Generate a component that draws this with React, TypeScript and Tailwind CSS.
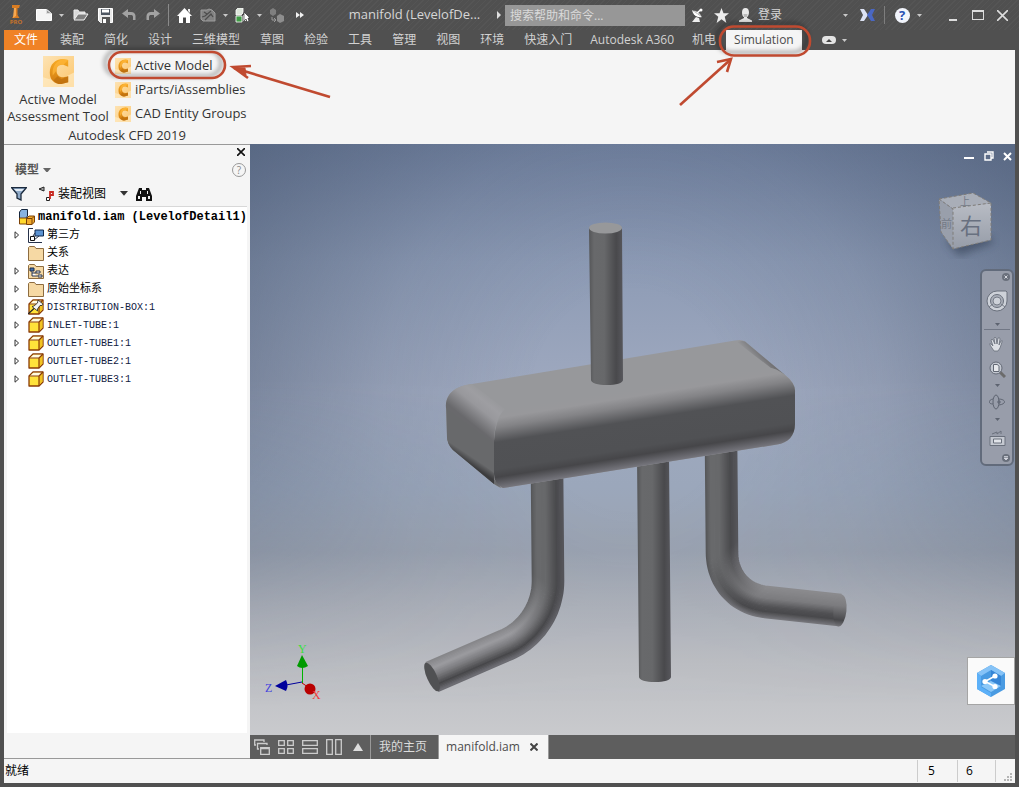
import React, { useState } from 'react';

type Point = [number, number];
type Stop = [number, number[]];

const ribbonTabs = [
  '装配', '简化', '设计', '三维模型', '草图', '检验', '工具', '管理',
  '视图', '环境', '快速入门', 'Autodesk A360', '机电', 'Simulation',
];

const cfdTools = ['Active Model', 'iParts/iAssemblies', 'CAD Entity Groups'];

const treeNodes = [
  { label: '第三方', icon: 'third', expandable: true },
  { label: '关系', icon: 'folder', expandable: false },
  { label: '表达', icon: 'views', expandable: true },
  { label: '原始坐标系', icon: 'folder', expandable: true },
  { label: 'DISTRIBUTION-BOX:1', icon: 'pinned', expandable: true },
  { label: 'INLET-TUBE:1', icon: 'part', expandable: true },
  { label: 'OUTLET-TUBE1:1', icon: 'part', expandable: true },
  { label: 'OUTLET-TUBE2:1', icon: 'part', expandable: true },
  { label: 'OUTLET-TUBE3:1', icon: 'part', expandable: true },
];

const isLatin = (text: string) => /^[A-Z]/.test(text);

const IconButton = ({ label, className = 'w-6', children }: { label: string; className?: string; children: React.ReactNode }) => (
  <button aria-label={label} className={`flex shrink-0 items-center justify-center ${className}`}>
    {children}
  </button>
);

const Caret = ({ color = '#c9c9c9', size = 5 }: { color?: string; size?: number }) => (
  <svg width={size} height={size * 0.6} viewBox="0 0 10 6"><path d="M0 0h10L5 6z" fill={color} /></svg>
);

const CfdIcon = ({ size }: { size: number }) => (
  <svg width={size} height={size} viewBox="0 0 32 32" className="shrink-0">
    <defs>
      <linearGradient id="cfdBg" x1="0" y1="0" x2="1" y2="1">
        <stop offset="0" stopColor="#fde3b4" />
        <stop offset="1" stopColor="#fcc66c" />
      </linearGradient>
      <linearGradient id="cfdRing" x1="0" y1="0" x2="0" y2="1">
        <stop offset="0" stopColor="#f9ac25" />
        <stop offset="1" stopColor="#d07b10" />
      </linearGradient>
    </defs>
    <path d="M0 0h32v32H0z" fill="url(#cfdBg)" />
    <path d="M0 22l14 4 18-9v15H0z" fill="#fff0d0" opacity=".6" />
    <path d="M26 11V4l-5-1C12 3 7 9 7 17c0 7 4 12 12 12l7-2v-6l-5 1c-5 0-7-3-7-7 0-5 3-6 7-6z" fill="url(#cfdRing)" />
    <path d="M26 4l-5 5c-5 0-7 2-7 6l-4 5c-1-10 4-15 11-17z" fill="#ffb73b" opacity=".7" />
    <path d="M11 25l4-4 4 3 7-3v6l-7 2c-4 0-6-1-8-4z" fill="#b86a0c" opacity=".6" />
  </svg>
);

const CubeIcon = () => (
  <>
    <path d="M1 5l4-4h10v10l-4 4H1z" fill="#ffe23a" stroke="#8a3b06" strokeWidth="1.3" strokeLinejoin="round" />
    <path d="M1.7 5.2L5.3 1.7h8.5l-3.3 3.5z" fill="#fffbe0" />
    <path d="M11 14V5l3.5-3v8.5z" fill="#f2c322" />
    <path d="M1 5h10v10M11 5l4-4" fill="none" stroke="#8a3b06" strokeWidth="1.2" />
  </>
);

const FolderIcon = () => (
  <path d="M.5 15.5v-13l1-1h5l1.500 2h7.500v12z" fill="#f6d9a4" stroke="#8d6c40" />
);

const NodeIcon = ({ kind }: { kind: string }) => (
  <svg width="16" height="16" viewBox="0 0 16 16" className="shrink-0">
    {kind === 'folder' && <FolderIcon />}
    {kind === 'views' && (
      <>
        <FolderIcon />
        <path d="M2 5h4v3H2z" fill="#3f6fae" stroke="#1c2c4a" />
        <path d="M4 8v5h5M4 10h4M8 8h4v2H8zM10 12h4v2h-4z" fill="#fff" stroke="#26324a" />
      </>
    )}
    {kind === 'third' && (
      <>
        <path d="M5 1.500H.5v14H14" fill="none" stroke="#26324a" />
        <path d="M7 3h8.500v6H7z" fill="#5c93d2" stroke="#10294c" />
        <path d="M3 12l4-6M6 13l5-4" fill="none" stroke="#26324a" />
        <path d="M2.500 9.500h4v4h-4z" fill="#fff" stroke="#111" />
      </>
    )}
    {kind === 'part' && <CubeIcon />}
    {kind === 'pinned' && (
      <>
        <CubeIcon />
        <path d="M10 1l5 4-1 1.500h-2L9.500 10v2L4 7.500l2-.5 3.500-3z" fill="#f4f4f4" stroke="#222" strokeWidth=".8" />
        <path d="M6 9.500L0 15" stroke="#222" strokeWidth="1.2" />
      </>
    )}
  </svg>
);

const TitleBar = () => (
  <header className="flex h-[30px] items-center bg-[repeating-linear-gradient(135deg,#505050_0px,#505050_3px,#555555_3px,#555555_4px)] text-[12px] text-[#d6d6d6]">
    <button aria-label="Inventor Pro" className="flex w-8 shrink-0 flex-col items-center text-[6px] leading-[6px] font-bold text-[#c87328]">
      <svg width="10" height="14" viewBox="0 0 10 14">
        <path d="M1 0h8l-1 3H6.500v7l2 3H1l2-3V3H1z" fill="#d87c22" />
        <path d="M3 3h2v8l-3 2z" fill="#f6a850" />
      </svg>
      PRO
    </button>
    <IconButton label="新建">
      <svg width="16" height="14" viewBox="0 0 16 14"><path d="M.5 1.500h10l5 4v7H.5z" fill="#f4f4f4" stroke="#fff" /><path d="M10.500 1.500v4h5z" fill="#9b9b9b" stroke="#ddd" /></svg>
    </IconButton>
    <IconButton label="新建选项" className="mr-[3px] w-2.5"><Caret /></IconButton>
    <IconButton label="打开">
      <svg width="16" height="12" viewBox="0 0 16 12"><path d="M1 10V1h4l1 2h6v2" fill="#d9d9d9" stroke="#eee" /><path d="M1 11l4-6h10l-4 6z" fill="#7f7f7f" stroke="#f2f2f2" /></svg>
    </IconButton>
    <IconButton label="保存">
      <svg width="15" height="15" viewBox="0 0 15 15"><path d="M.5.5h14v14h-12l-2-2z" fill="#e9e9e9" stroke="#fff" /><path d="M3 1h9v6H3z" fill="#4d5560" /><path d="M4 1.500h7v3H4z" fill="#fff" /><path d="M4 9h8v6H4z" fill="#555" /><path d="M5 11h3v4H5z" fill="#fff" /></svg>
    </IconButton>
    <IconButton label="撤消">
      <svg width="14" height="12" viewBox="0 0 14 12"><path d="M6 0v3h3c3 0 4.500 2 4.500 4v4H11V8c0-1.500-1-2-2-2H6v3L0 4.500z" fill="#a2a2a2" /></svg>
    </IconButton>
    <IconButton label="重做">
      <svg width="14" height="12" viewBox="0 0 14 12"><path d="M8 0v3H5C2 3 .5 5 .5 7v4H3V8c0-1.500 1-2 2-2h3v3l6-4.500z" fill="#a2a2a2" /></svg>
    </IconButton>
    <span className="mx-[3px] h-[22px] w-px shrink-0 bg-[#8a8a8a]" />
    <IconButton label="主页">
      <svg width="15" height="15" viewBox="0 0 15 15"><path d="M7.500 0L15 8h-2v7H9V9.500H6V15H2V8H0z" fill="#fff" /><path d="M11 1h2v4l-2-2z" fill="#eee" /><path d="M6.500 10h2v5h-2z" fill="#444" /></svg>
    </IconButton>
    <IconButton label="更新">
      <svg width="16" height="14" viewBox="0 0 16 14"><path d="M1 2h6l2-1 3 1 3 3v8H3l-2-2z" fill="#828282" stroke="#9c9c9c" /><path d="M2 9l3-1 6-5M5 12l6-6 2 3M4 4l3 2" fill="none" stroke="#4d4d4d" strokeWidth="1.300" /></svg>
    </IconButton>
    <IconButton label="更新选项" className="w-2.5"><Caret /></IconButton>
    <IconButton label="选择">
      <svg width="15" height="15" viewBox="0 0 15 15"><path d="M1 2l2-2h5v5L6 7H1z" fill="#dce5da" stroke="#fff" strokeWidth=".8" /><path d="M1 8h6v6H1z" fill="#3f9b45" stroke="#fff" strokeWidth=".8" /><path d="M8 7h3v6H8z" fill="#e8e8e8" /><path d="M9 4v9l2-2 1 3 2-1-1-3h2z" fill="#fff" stroke="#333" strokeWidth=".7" /></svg>
    </IconButton>
    <IconButton label="选择选项" className="w-2.5"><Caret /></IconButton>
    <IconButton label="替换">
      <svg width="15" height="15" viewBox="0 0 15 15"><path d="M1 2l3-2 3 2v4L4 8 1 6z" fill="#7f7f7f" /><path d="M8 8l3-2 4 2v5l-4 2-3-2z" fill="#8e8e8e" /><path d="M3 9v3h3M5 10l2 2-2 2" fill="none" stroke="#999" /></svg>
    </IconButton>
    <IconButton label="更多">
      <svg width="8" height="6" viewBox="0 0 8 6"><path d="M0 0l4 3-4 3zM4 0l4 3-4 3z" fill="#f2f2f2" /></svg>
    </IconButton>
    <h1 className="min-w-0 flex-1 truncate pl-6 text-center text-[13px]">manifold (LevelofDe...</h1>
    <IconButton label="展开搜索" className="w-3">
      <svg width="4" height="8" viewBox="0 0 4 8"><path d="M0 0l4 4-4 4z" fill="#dedede" /></svg>
    </IconButton>
    <input
      aria-label="搜索帮助和命令"
      placeholder="搜索帮助和命令..."
      className="h-[21px] w-[180px] shrink-0 bg-[#979797] px-[5px] text-[12px] placeholder:text-[#dadada]"
    />
    <IconButton label="通信中心">
      <svg width="13" height="15" viewBox="0 0 13 15"><path d="M1 2c1 5 5 8 10 7z" fill="#fff" /><path d="M1.500 3C5 2 9 5 10.500 8.500" fill="#ccc" /><path d="M6 5l4-3.500" stroke="#fff" strokeWidth="1.500" /><path d="M1 14l4-5 3 1 1 4z" fill="#eee" /><circle cx="10" cy="2" r="1.500" fill="#fff" /></svg>
    </IconButton>
    <IconButton label="收藏夹">
      <svg width="15" height="15" viewBox="0 0 15 15"><path d="M7.500 0l2 5.200H15l-4.300 3.500L12.400 15l-4.900-3.700L2.600 15l1.700-6.300L0 5.200h5.500z" fill="#eee" /></svg>
    </IconButton>
    <IconButton label="用户">
      <svg width="15" height="15" viewBox="0 0 15 15"><path d="M7.500 0C10 0 11 2 11 4.500S9.500 9 9 9v1l5 2.500V14H1v-1.500L6 10V9C5 9 4 7 4 4.500S5 0 7.500 0z" fill="#eaeaea" /><path d="M5.500 6h4L9 9H6z" fill="#bbb" /></svg>
    </IconButton>
    <button className="mr-1 flex h-full w-[94px] shrink-0 items-center justify-between pr-[3px] pl-px">登录<Caret /></button>
    <IconButton label="Exchange">
      <svg width="15" height="12" viewBox="0 0 15 12"><path d="M0 0h4l4 6-4 6H0l3-6z" fill="#dce2f3" /><path d="M15 0h-4L7 6l4 6h4l-3-6z" fill="#4a67c2" /></svg>
    </IconButton>
    <span className="mx-[5px] h-[18px] w-px shrink-0 bg-[#7e7e7e]" />
    <IconButton label="帮助">
      <span className="flex size-[15px] items-center justify-center rounded-full bg-[#f2f5fc] text-[13px] leading-none font-bold text-[#2951b4]">?</span>
    </IconButton>
    <IconButton label="帮助选项" className="mr-4 w-2.5"><Caret /></IconButton>
    <IconButton label="最小化" className="w-[25px]"><span className="mt-2.5 h-0.5 w-2 bg-[#ddd]" /></IconButton>
    <IconButton label="最大化" className="w-[25px]"><span className="h-2.5 w-3 border border-t-2 border-[#ddd]" /></IconButton>
    <IconButton label="关闭" className="mr-1 w-[25px]">
      <svg width="11" height="11" viewBox="0 0 11 11"><path d="M0 0l11 11M11 0L0 11" stroke="#ddd" strokeWidth="1.600" /></svg>
    </IconButton>
  </header>
);

const RibbonTabs = ({ active, onSelect }: { active: string; onSelect: (tab: string) => void }) => (
  <nav className="flex h-5 shrink-0 px-1 text-[12px] leading-5 text-[#d2d2d2]">
    <button className="mr-0.5 shrink-0 bg-[#f08226] px-2.5 text-white">文件</button>
    {ribbonTabs.map((tab) => (
      <button
        key={tab}
        onClick={() => onSelect(tab)}
        className={`shrink-0 whitespace-nowrap ${isLatin(tab) ? 'px-2' : 'px-2.5'} ${tab === active ? 'bg-[#f5f5f5] text-[#4c4c4c]' : ''}`}
      >
        {tab}
      </button>
    ))}
    <button aria-label="功能区显示" className="ml-5 flex items-center gap-1.5">
      <span className="flex h-2 w-3.5 items-center justify-center rounded-sm bg-[#e4e4e4]">
        <svg width="6" height="3" viewBox="0 0 6 3"><path d="M0 3l3-3 3 3z" fill="#444" /></svg>
      </span>
      <Caret />
    </button>
  </nav>
);

const RibbonPanel = () => (
  <section className="mx-1 h-[94px] shrink-0 bg-[#f5f5f5] text-[13px] text-[#333]">
    <div className="w-[246px]">
      <div className="flex h-[76px] pt-1">
        <button className="flex w-[108px] shrink-0 flex-col items-center pt-0.5 leading-[17px]">
          <CfdIcon size={31} />
          <span className="mt-1">Active Model<br />Assessment Tool</span>
        </button>
        <div className="ml-[3px] flex flex-col">
          {cfdTools.map((tool) => (
            <button key={tool} className="flex h-6 items-center gap-1 whitespace-nowrap">
              <CfdIcon size={16} />
              {tool}
            </button>
          ))}
        </div>
      </div>
      <div className="text-center leading-[18px]">Autodesk CFD 2019</div>
    </div>
  </section>
);

const ModelBrowser = () => (
  <aside className="flex w-[246px] shrink-0 flex-col border-t border-b border-[#999] bg-[#f5f5f5] px-[3px] text-[12px] text-black">
    <div className="flex h-3.5 justify-end">
      <IconButton label="关闭浏览器" className="w-3">
        <svg width="8" height="8" viewBox="0 0 8 8"><path d="M0 0l8 8M8 0L0 8" stroke="#111" strokeWidth="1.600" /></svg>
      </IconButton>
    </div>
    <div className="flex h-[22px] items-center justify-between pl-2">
      <button className="flex items-center gap-1 font-bold text-[#555]">模型<Caret color="#666" size={8} /></button>
      <button aria-label="帮助" className="mr-px flex size-3.5 items-center justify-center rounded-full border border-[#999] text-[10px] text-[#888]">?</button>
    </div>
    <div className="flex h-[26px] items-center border-b border-[#d8d8d8] pl-1">
      <button aria-label="过滤器">
        <svg width="16" height="14" viewBox="0 0 16 14"><path d="M.7.7h14.600L10 7v6l-4-2V7z" fill="#8ea9c7" stroke="#1b2a3d" strokeWidth="1.300" /><path d="M3 2h10l-2 2H5z" fill="#e2ecf6" /></svg>
      </button>
      <button className="ml-3 flex items-center gap-1 whitespace-nowrap">
        <svg width="15" height="15" viewBox="0 0 15 15"><path d="M0 3l5-2v4z" fill="#aaa" stroke="#222" /><path d="M7.500 11.500h3v3h-3z" fill="#fff" stroke="#222" /><path d="M11 13V6h3v3h-3" fill="none" stroke="#c82a22" strokeWidth="1.800" /></svg>
        装配视图
        <span className="ml-2.5"><Caret color="#333" size={8} /></span>
      </button>
      <button aria-label="查找" className="ml-2">
        <svg width="16" height="14" viewBox="0 0 16 14"><path d="M3 1h3v2h4V1h3l3 8v5h-6v-4H6v4H0V9z" fill="#111" /><path d="M2 9h2v3H2zM12 9h2v3h-2zM4 4h1v3H4zM11 4h1v3h-1z" fill="#eee" /></svg>
      </button>
    </div>
    <ul className="flex-1 bg-white pt-px font-['Liberation_Mono','Noto_Sans_CJK_SC',monospace]">
      <li>
        <button className="flex h-[18px] items-center gap-[3px] pl-3 text-[12px] font-bold whitespace-nowrap">
          <svg width="16" height="16" viewBox="0 0 16 16" className="shrink-0">
            <path d="M.5 3l2-2.500h6V7l-2 2.500h-6z" fill="#86b2e0" stroke="#15263d" />
            <path d="M.5 9h7v6h-7z" fill="#ffd92e" stroke="#7c4206" />
            <path d="M7.500 9.500L10 7h5.500v6L13 15.500H7.500z" fill="#f2ac2c" stroke="#7c4206" />
            <path d="M7.500 9.500H13v6M13 9.500L15.500 7" fill="none" stroke="#7c4206" />
          </svg>
          manifold.iam (LevelofDetail1)
        </button>
      </li>
      {treeNodes.map((node) => (
        <li key={node.label} className="flex h-[18px] items-center pl-[7px]">
          <button aria-label="展开" className="w-3.5 shrink-0">
            {node.expandable && (
              <svg width="6" height="8" viewBox="0 0 6 8"><path d="M1 .8L4.600 4 1 7.200z" fill="#fff" stroke="#333" /></svg>
            )}
          </button>
          <button className={`flex items-center gap-[3px] whitespace-nowrap ${isLatin(node.label) ? 'text-[10px] text-[#10203f]' : 'text-[11px]'}`}>
            <NodeIcon kind={node.icon} />
            {node.label}
          </button>
        </li>
      ))}
    </ul>
    <div className="h-[25px]" />
  </aside>
);

// Shading across a tube, from its left side (0) to its right side (1)
const uprightShade: Stop[] = [
  [0, [86, 87, 89]], [0.15, [104, 105, 107]], [0.45, [103, 104, 106]], [0.8, [73, 73, 76]], [1, [84, 84, 89]],
];
const leftArmShade: Stop[] = [
  [0, [134, 134, 137]], [0.25, [155, 155, 159]], [0.5, [122, 122, 126]], [0.8, [70, 70, 73]], [1, [108, 108, 114]],
];
const rightArmShade: Stop[] = [
  [0, [116, 116, 121]], [0.2, [72, 72, 75]], [0.35, [80, 80, 83]], [0.65, [124, 124, 127]], [1, [138, 138, 141]],
];

const shadeAt = (stops: Stop[], t: number) => {
  const i = Math.max(1, stops.findIndex(([at]) => at >= t));
  const [a, from] = stops[i - 1];
  const [b, to] = stops[i];
  const k = (t - a) / (b - a);
  return `rgb(${from.map((v, n) => Math.round(v + (to[n] - v) * k)).join(',')})`;
};

const BentTube = ({ id, start, bendStart, corner, bendEnd, end, arm, radius = 16 }: {
  id: string; start: Point; bendStart: Point; corner: Point; bendEnd: Point; end: Point; arm: Stop[]; radius?: number;
}) => {
  const mix = (a: Point, b: Point, k: number): Point => [a[0] + (b[0] - a[0]) * k, a[1] + (b[1] - a[1]) * k];
  const c1 = mix(bendStart, corner, 0.6);
  const c2 = mix(bendEnd, corner, 0.6);
  const center: Point[] = [start];
  for (let i = 0; i <= 24; i++) {
    const t = i / 24;
    const u = 1 - t;
    center.push([0, 1].map((n) =>
      u * u * u * bendStart[n] + 3 * u * u * t * c1[n] + 3 * u * t * t * c2[n] + t * t * t * bendEnd[n]) as Point);
  }
  center.push(end);
  const lines = 26;
  return (
    <g fill="none" strokeWidth="2">
      {Array.from({ length: lines }, (_, n) => {
        const t = n / (lines - 1);
        const offset = (t - 0.5) * 2 * (radius - 0.7);
        const points = center.map((p, i) => {
          const a = center[Math.max(0, i - 1)];
          const b = center[Math.min(center.length - 1, i + 1)];
          const len = Math.hypot(b[0] - a[0], b[1] - a[1]);
          return `${(p[0] + ((b[1] - a[1]) / len) * offset).toFixed(1)},${(p[1] - ((b[0] - a[0]) / len) * offset).toFixed(1)}`;
        });
        return (
          <g key={n}>
            <linearGradient id={`${id}${n}`} gradientUnits="userSpaceOnUse" x1={bendStart[0]} y1={bendStart[1] - 8} x2={bendEnd[0]} y2={bendEnd[1]}>
              <stop offset="0.1" stopColor={shadeAt(uprightShade, t)} />
              <stop offset="0.85" stopColor={shadeAt(arm, t)} />
            </linearGradient>
            <polyline points={points.join(' ')} stroke={`url(#${id}${n})`} />
          </g>
        );
      })}
    </g>
  );
};

const Scene = () => (
  <svg className="absolute inset-0 size-full" viewBox="250 144 765 591" preserveAspectRatio="xMidYMid slice">
    <defs>
      <linearGradient id="sky" x1="0" y1="0" x2="0" y2="1">
        <stop offset="0" stopColor="#7282a0" />
        <stop offset=".2" stopColor="#8d9bb5" />
        <stop offset=".42" stopColor="#9fa9bf" />
        <stop offset=".58" stopColor="#9ba7bb" />
        <stop offset=".69" stopColor="#9ba3b1" />
        <stop offset=".78" stopColor="#adb1ba" />
        <stop offset=".88" stopColor="#bdbfc4" />
        <stop offset="1" stopColor="#c9cacd" />
      </linearGradient>
      <radialGradient id="vignette" gradientUnits="userSpaceOnUse" cx="632" cy="400" r="500" gradientTransform="translate(0 -40) scale(1 1.1)">
        <stop offset=".2" stopColor="#404f68" stopOpacity="0" />
        <stop offset=".5" stopColor="#404f68" stopOpacity=".14" />
        <stop offset="1" stopColor="#404f68" stopOpacity=".6" />
      </radialGradient>
      <linearGradient id="fade" x1="0" y1="0" x2="0" y2="1">
        <stop offset=".4" stopColor="#fff" />
        <stop offset=".8" stopColor="#333" />
        <stop offset=".95" stopColor="#000" />
      </linearGradient>
      <mask id="fadeMask"><path d="M250 144h765v591H250z" fill="url(#fade)" /></mask>
      <linearGradient id="upright" x1="0" y1="0" x2="1" y2="0">
        <stop offset="0" stopColor="#555658" />
        <stop offset=".15" stopColor="#68696b" />
        <stop offset=".45" stopColor="#67686a" />
        <stop offset=".8" stopColor="#49494c" />
        <stop offset="1" stopColor="#57575c" />
      </linearGradient>
      <linearGradient id="front" gradientUnits="userSpaceOnUse" x1="505" y1="409" x2="517" y2="485">
        <stop offset="0" stopColor="#97989b" />
        <stop offset=".1" stopColor="#98989b" />
        <stop offset=".22" stopColor="#838386" />
        <stop offset=".41" stopColor="#515255" />
        <stop offset=".76" stopColor="#505154" />
        <stop offset=".86" stopColor="#464649" />
        <stop offset="1" stopColor="#74747b" />
      </linearGradient>
      <linearGradient id="endFillet" gradientUnits="userSpaceOnUse" x1="470" y1="422" x2="491" y2="396">
        <stop offset="0" stopColor="#69696c" />
        <stop offset=".5" stopColor="#98989c" />
        <stop offset=".75" stopColor="#9e9ea2" />
        <stop offset="1" stopColor="#97989b" />
      </linearGradient>
      <linearGradient id="backFillet" gradientUnits="userSpaceOnUse" x1="758" y1="366" x2="767" y2="358">
        <stop offset="0" stopColor="#97989b" />
        <stop offset="1" stopColor="#6f6f72" />
      </linearGradient>
      <linearGradient id="underside" gradientUnits="userSpaceOnUse" x1="472" y1="457" x2="468" y2="463">
        <stop offset="0" stopColor="#68696b" />
        <stop offset="1" stopColor="#3c3c3e" />
      </linearGradient>
      <linearGradient id="tip" x1="0" y1="0" x2="0" y2="1">
        <stop offset="0" stopColor="#8a8a8d" />
        <stop offset=".35" stopColor="#7c7c7f" />
        <stop offset=".8" stopColor="#48484b" />
        <stop offset="1" stopColor="#747479" />
      </linearGradient>
      <linearGradient id="cubeFace" x1="0" y1="0" x2="0" y2="1">
        <stop offset="0" stopColor="#b8bcc4" />
        <stop offset="1" stopColor="#969ca8" />
      </linearGradient>
      <filter id="soft"><feGaussianBlur stdDeviation="4" /></filter>
    </defs>
    <path d="M250 144h765v591H250z" fill="url(#sky)" />
    <path d="M250 144h765v591H250z" fill="url(#vignette)" mask="url(#fadeMask)" />

    {/* outlet tubes */}
    <BentTube id="outA" start={[547, 470]} bendStart={[548, 581]} corner={[548, 627]} bendEnd={[506, 645]} end={[432, 677]} arm={leftArmShade} />
    <ellipse cx="432" cy="677" rx="5" ry="15.500" transform="rotate(-24 432 677)" fill="#505153" />
    <path d="M637 455h32l2 222c0 3-7 5-16 5s-16-2-16-5z" fill="url(#upright)" />
    <BentTube id="outB" start={[721, 440]} bendStart={[722, 552]} corner={[722, 597]} bendEnd={[766, 602]} end={[840, 610]} arm={rightArmShade} />
    <ellipse cx="840" cy="610.500" rx="6.500" ry="16" transform="rotate(6 840 610)" fill="url(#tip)" />

    {/* distribution box */}
    <path d="M446 405C446 394 455 386 472 384L735 340.500q7-1.500 10 1L785 375Q795 382 795 392V424C795 436 788 443 777 444.500L503 488Q499 488 494 484L453 450Q447 444 447 437z" fill="#97989b" />
    <path d="M742 341l3 .5L785 375l-14-7-34-26z" fill="url(#backFillet)" />
    <path d="M446 404l48 36v39l7 9-7-4-41-34Q447 444 447 437z" fill="#68696b" />
    <path d="M446 408C445 394 455 386 472 384l33 25Q494 419 494 443z" fill="url(#endFillet)" />
    <path d="M447 435l47 38v11L453 450Q447 444 447 435z" fill="url(#underside)" />
    <path d="M505 409L765 368Q774 366 785 375T795 392V424C795 436 788 443 777 444.500L503 488Q494 484 494 474V441Q495 420 505 409z" fill="url(#front)" />

    {/* inlet tube */}
    <path d="M589 228h33l1 152c0 3-7 5-16 5s-16-2-16-5z" fill="url(#upright)" />
    <ellipse cx="605.500" cy="228" rx="16.500" ry="5.500" fill="#97989a" />

    {/* view cube */}
    <path d="M945 240l40-6 10 8-36 14z" fill="#2f3b50" opacity=".55" filter="url(#soft)" />
    <path d="M939 199l34-6 18 10-38 6z" fill="#a9aeb8" />
    <path d="M939 199l14 10v40l-12-17z" fill="#999fab" />
    <path d="M953 208l38-5v37l-38 9z" fill="url(#cubeFace)" />
    <path d="M939 199l34-6 18 10v37l-38 9-12-17zM939 199l14 10v40M953 208l38-5" fill="none" stroke="#7f7c78" strokeDasharray="3 2" />
    <text x="960" y="234" fontSize="22" fill="#68707f" fontFamily="Noto Sans CJK SC, sans-serif">右</text>
    <text x="941" y="228" fontSize="11" fill="#747b88" fontFamily="Noto Sans CJK SC, sans-serif">前</text>
    <text x="960" y="205" fontSize="10" fill="#747b88" fontFamily="Noto Sans CJK SC, sans-serif">上</text>

    {/* axis triad */}
    <g fontFamily="Liberation Serif, serif" fontSize="12">
      <path d="M302.500 683v-22" stroke="#00b400" />
      <path d="M302 655l6 11q-6 4-11 0z" fill="#009a00" />
      <path d="M302 682l-16 3" stroke="#00009c" />
      <path d="M275 686l11-6q3 6 0 11z" fill="#00009c" />
      <path d="M302 683l6 4" stroke="#c00000" />
      <circle cx="310" cy="689" r="5.500" fill="#b90000" />
      <text x="298" y="653" fill="#3be03b">Y</text>
      <text x="265" y="692" fill="#4444dd">Z</text>
      <text x="312" y="699" fill="#ef3a3a">X</text>
    </g>
  </svg>
);

const NavigationBar = () => (
  <div className="absolute top-[125px] right-px flex w-[34px] flex-col items-center rounded-md border-2 border-[#626b7b] bg-[#989daa] pb-px">
    <button aria-label="关闭导航栏" className="mr-0.5 flex h-3 items-center self-end">
      <svg width="8" height="8" viewBox="0 0 8 8"><circle cx="4" cy="4" r="4" fill="#6a707c" /><path d="M2.500 2.500l3 3M5.500 2.500l-3 3" stroke="#d5d8df" /></svg>
    </button>
    <IconButton label="全导航控制盘" className="h-9 w-full">
      <svg width="22" height="22" viewBox="0 0 22 22"><path d="M11 1h9l1 1v9A10 10 0 1 1 11 1z" fill="#cdd1d8" stroke="#6b717d" /><circle cx="11" cy="11" r="6.500" fill="#a9aeb8" stroke="#6b717d" /><circle cx="11" cy="11" r="4" fill="#cdd1d8" stroke="#777d88" /><path d="M3 17l4-3M15 14l4 3" stroke="#777d88" /></svg>
    </IconButton>
    <div className="flex h-2.5 items-center"><Caret color="#5d6370" /></div>
    <div className="h-px w-[26px] bg-[#717785]" />
    <IconButton label="平移" className="h-7 w-full">
      <svg width="16" height="16" viewBox="0 0 16 16"><path d="M5 15L1 9q-1-2 1-1l2 2-2-6q1-2 2 0l2 4-1-6q1-2 2 0l1 6 1-6q2-1 2 1l-1 6 2-4q2-1 1 1l-2 6-2 3z" fill="#dcdfe5" stroke="#686e7a" strokeWidth=".8" /></svg>
    </IconButton>
    <IconButton label="缩放" className="h-[22px] w-full">
      <svg width="17" height="17" viewBox="0 0 17 17"><path d="M10 10l6 6" stroke="#6b6b6b" strokeWidth="3" /><circle cx="7" cy="7" r="6" fill="#c3c8d1" stroke="#646a76" /><path d="M4.500 3.500h4l1.500 2v5H4.500z" fill="#e6e8ec" stroke="#626874" /></svg>
    </IconButton>
    <div className="flex h-2.5 items-center"><Caret color="#5d6370" /></div>
    <IconButton label="动态观察" className="h-6 w-full">
      <svg width="16" height="16" viewBox="0 0 16 16" fill="none" stroke="#5f6572"><ellipse cx="7" cy="8" rx="3" ry="7" /><path d="M4 5C-1 6-1 10 4 10M9 5c8 0 9 5 1 6M8 8h4M10 6v4" /></svg>
    </IconButton>
    <div className="flex h-2.5 items-center"><Caret color="#5d6370" /></div>
    <IconButton label="观察方向" className="h-7 w-full">
      <svg width="17" height="16" viewBox="0 0 17 16"><path d="M1 6.500h15v9H1z" fill="#c5c9d1" stroke="#6a707c" /><path d="M4.500 9h8v4h-8z" fill="#e1e4e9" stroke="#6a707c" /><path d="M3 4l5-2v2l4-3v3" fill="none" stroke="#6a707c" /></svg>
    </IconButton>
    <button aria-label="自定义导航栏" className="mr-0.5 flex h-[11px] items-center self-end">
      <svg width="8" height="8" viewBox="0 0 8 8"><circle cx="4" cy="4" r="4" fill="#6a707c" /><path d="M2 2.500h4M2 4h4L4 6z" stroke="#d5d8df" strokeWidth=".8" fill="#d5d8df" /></svg>
    </button>
  </div>
);

const Viewport = () => (
  <div className="relative min-h-0 flex-1 overflow-hidden">
    <Scene />
    <div className="absolute top-1 right-0 flex">
      <IconButton label="最小化文档" className="h-4 w-5"><span className="mt-1 h-0.5 w-2.5 bg-white" /></IconButton>
      <IconButton label="还原文档" className="h-4 w-5">
        <svg width="10" height="10" viewBox="0 0 10 10"><path d="M3 1h6v6H7M1 3h6v6H1z" fill="none" stroke="#fff" strokeWidth="1.400" /></svg>
      </IconButton>
      <IconButton label="关闭文档" className="h-4 w-4">
        <svg width="9" height="9" viewBox="0 0 9 9"><path d="M1 1l7 7M8 1L1 8" stroke="#fff" strokeWidth="2" /></svg>
      </IconButton>
    </div>
    <NavigationBar />
    <button aria-label="共享" className="absolute right-0 bottom-[30px] flex size-12 items-center justify-center border border-[#a5a5a5] bg-[#fafafa]">
      <svg width="28" height="32" viewBox="0 0 28 32">
        <path d="M14 0l14 8v16l-14 8-14-8V8z" fill="#4a9be2" />
        <path d="M14 0l14 8-4 3-10-6-10 6-4-3z" fill="#86c3f7" />
        <path d="M0 8l4 3v11l10 6v4L0 24z" fill="#5cb0f8" />
        <path d="M14 5l10 6v10l-10-4z" fill="#3585d6" />
        <path d="M4 21l10-5 10 5-10 6z" fill="#8bc8f8" />
        <path d="M18 11L8 16.500l10 5" fill="none" stroke="#fff" strokeWidth="1.500" />
        <circle cx="18" cy="11" r="2.600" fill="#fff" />
        <circle cx="8" cy="16.500" r="2.600" fill="#fff" />
        <circle cx="18" cy="21.500" r="2.600" fill="#fff" />
      </svg>
    </button>
  </div>
);

const DocumentTabs = () => (
  <div className="flex h-6 shrink-0 bg-[#5e5e5e] text-[12px] text-[#dcdcdc]">
    <IconButton label="层叠"><svg width="16" height="16" viewBox="0 0 16 16" fill="none" stroke="#ccc" strokeWidth="1.300"><path d="M2 6H.7V1H10v2M5 10H3.500V4.500H13V6M6.700 8.700h8.600v6.600H6.700zM6.700 9.500h8.600" /></svg></IconButton>
    <IconButton label="排列"><svg width="16" height="16" viewBox="0 0 16 16" fill="none" stroke="#ccc" strokeWidth="1.300"><path d="M.7 1.700h5.600v4.600H.7zM9.700 1.700h5.600v4.600H9.700zM.7 9.700h5.600v4.600H.7zM9.700 9.700h5.600v4.600H9.700z" /></svg></IconButton>
    <IconButton label="水平平铺"><svg width="16" height="16" viewBox="0 0 16 16" fill="none" stroke="#ccc" strokeWidth="1.300"><path d="M.7 1.700h14.600v4.600H.7zM.7 9.700h14.600v4.600H.7z" /></svg></IconButton>
    <IconButton label="垂直平铺"><svg width="16" height="16" viewBox="0 0 16 16" fill="none" stroke="#ccc" strokeWidth="1.300"><path d="M.7.7h5.600v14.600H.7zM9.700.7h5.600v14.600H9.700z" /></svg></IconButton>
    <IconButton label="列出文档"><svg width="10" height="8" viewBox="0 0 10 8"><path d="M5 0l5 8H0z" fill="#ddd" /></svg></IconButton>
    <button className="border-l border-[#999] px-2">我的主页</button>
    <div className="ml-[3px] flex items-center gap-2.5 border-x border-[#999] bg-[#f5f5f5] pr-2.5 pl-[7px] text-[#4c4c4c]">
      <button>manifold.iam</button>
      <button aria-label="关闭 manifold.iam">
        <svg width="8" height="8" viewBox="0 0 8 8"><path d="M.5.5l7 7M7.500.5l-7 7" stroke="#444" strokeWidth="2" /></svg>
      </button>
    </div>
  </div>
);

const StatusBar = () => (
  <footer className="mx-1 flex h-6 shrink-0 items-center justify-between bg-[#f5f5f5] text-[12px] text-black">
    <span className="pl-px">就绪</span>
    <div className="flex h-[22px] items-center">
      <span className="flex h-full w-10 items-center border-l border-[#ccc] pl-2.5">5</span>
      <span className="flex h-full w-[38px] items-center border-l border-[#ccc] pl-2">6</span>
      <span className="flex h-full w-5 items-end justify-end border-l border-[#ccc] pr-0.5">
        <svg width="9" height="9" viewBox="0 0 9 9"><path d="M6 0h2v2H6zM3 3h2v2H3zM6 3h2v2H6zM0 6h2v2H0zM3 6h2v2H3zM6 6h2v2H6z" fill="#b5b5b5" /></svg>
      </span>
    </div>
  </footer>
);

// Red call-outs that point at the Simulation tab and the Active Model button
const Callouts = () => (
  <svg width="840" height="120" viewBox="0 0 840 120" fill="none" stroke="#c04a30" strokeWidth="2.600" className="pointer-events-none absolute top-0 left-0">
    <rect x="109" y="52" width="116" height="26" rx="13" className="drop-shadow-[-4px_-2px_2px_rgba(0,0,0,0.4)]" />
    <rect x="720" y="26.500" width="90" height="29" rx="14" className="drop-shadow-[-3px_-3px_2px_rgba(0,0,0,0.4)]" />
    <path d="M330 97L234 68" />
    <path d="M251 66l-18 1 15 11" />
    <path d="M234 68l12 7-1-7z" fill="#c04a30" strokeWidth="1" />
    <path d="M680 105l50-45" />
    <path d="M717 62l14-3-4 13" />
  </svg>
);

const App = () => {
  const [activeTab, setActiveTab] = useState('Simulation');

  return (
    <div className="relative flex h-screen flex-col overflow-hidden bg-[#505050] pb-1 font-['Open_Sans','Noto_Sans_CJK_SC',sans-serif]">
      <TitleBar />
      <RibbonTabs active={activeTab} onSelect={setActiveTab} />
      <RibbonPanel />
      <main className="flex min-h-0 flex-1 px-1">
        <ModelBrowser />
        <div className="flex min-w-0 flex-1 flex-col">
          <Viewport />
          <DocumentTabs />
        </div>
      </main>
      <StatusBar />
      <Callouts />
    </div>
  );
};

export default App;
